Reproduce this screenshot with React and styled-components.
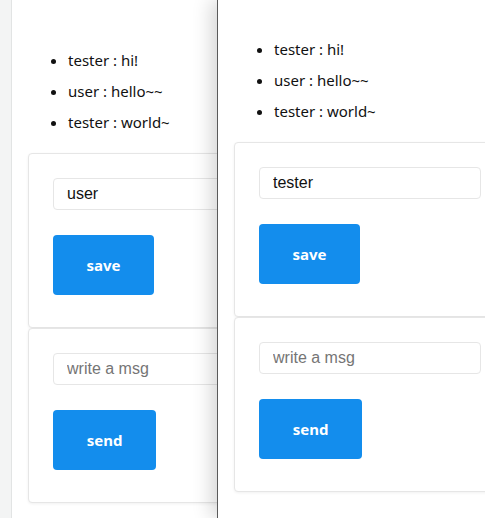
import React from "react";
import styled, { createGlobalStyle } from "styled-components";

const GlobalStyle = createGlobalStyle`
  html, body {
    margin: 0;
    padding: 0;
    background: #f3f4f4;
  }
  * {
    box-sizing: border-box;
  }
`;

const messages = [
  { user: "tester", text: "hi!" },
  { user: "user", text: "hello~~" },
  { user: "tester", text: "world~" },
];

const ChatWindow = ({ name, offset, front }) => (
  <Window $offset={offset} $front={front}>
    <MessageList>
      {messages.map((m, i) => (
        <MessageItem key={i}>
          {m.user} : {m.text}
        </MessageItem>
      ))}
    </MessageList>
    <Card>
      <TextInput defaultValue={name} />
      <ActionButton>save</ActionButton>
    </Card>
    <Card>
      <TextInput placeholder="write a msg" />
      <ActionButton $wide>send</ActionButton>
    </Card>
  </Window>
);

const App = () => (
  <>
    <GlobalStyle />
    <Desktop>
      <ChatWindow name="user" offset={11} />
      <ChatWindow name="tester" offset={217} front />
    </Desktop>
  </>
);

export default App;

const Desktop = styled.div`
  position: relative;
  width: 485px;
  height: 518px;
  overflow: hidden;
  background: #f3f4f4;
`;

const Window = styled.div`
  position: absolute;
  top: 0;
  left: ${(p) => p.$offset}px;
  width: 305px;
  height: 518px;
  padding: ${(p) => (p.$front ? "16px" : "27px")} 16px 0 16px;
  background: #fff;
  border-left: 1px solid ${(p) => (p.$front ? "#5a5a5a" : "#e2e4e4")};
  box-shadow: ${(p) => (p.$front ? "-6px 0 18px rgba(0, 0, 0, 0.16)" : "none")};
  z-index: ${(p) => (p.$front ? 2 : 1)};
`;

const MessageList = styled.ul`
  margin: 18px 0 15px;
  padding-left: 40px;
  font-family: "Noto Sans", sans-serif;
  font-size: 15px;
  color: #111;
`;

const MessageItem = styled.li`
  line-height: 31px;
`;

const Card = styled.div`
  display: flex;
  flex-direction: column;
  align-items: flex-start;
  gap: 25px;
  padding: 24px 24px 32px 24px;
  border: 1px solid #e6e6e6;
  border-radius: 4px;
  background: #fff;
  box-shadow: 0 1px 3px rgba(0, 0, 0, 0.06);
`;

const TextInput = styled.input`
  width: 100%;
  height: 32px;
  padding: 0 13px;
  border: 1px solid #e6e6e6;
  border-radius: 4px;
  font-family: "Liberation Sans", Arial, sans-serif;
  font-size: 16px;
  color: #111;
  outline: none;
  &::placeholder {
    color: #757575;
  }
`;

const ActionButton = styled.button`
  width: ${(p) => (p.$wide ? "103px" : "101px")};
  height: 60px;
  border: none;
  border-radius: 4px;
  background: #138ded;
  color: #fff;
  font-family: "Noto Sans", sans-serif;
  font-weight: 700;
  font-size: 15px;
  cursor: pointer;
`;
